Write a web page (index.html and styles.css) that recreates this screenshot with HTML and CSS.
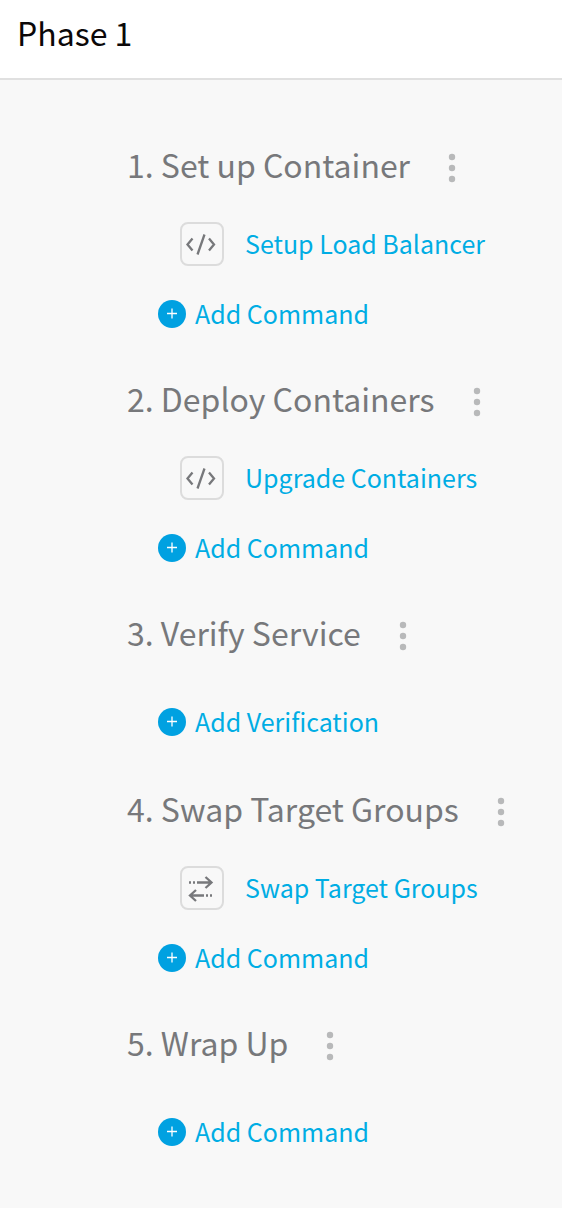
FILE: index.html
```html
<!DOCTYPE html>
<html lang="en">
<head>
<meta charset="utf-8">
<meta name="viewport" content="width=device-width, initial-scale=1">
<title>Phase 1</title>
<link rel="stylesheet" href="styles.css">
</head>
<body>
<svg class="symbols" aria-hidden="true">
  <symbol id="dots" viewBox="0 0 8 30"><circle cx="4" cy="4" r="3.2"/><circle cx="4" cy="15" r="3.2"/><circle cx="4" cy="26" r="3.2"/></symbol>
  <symbol id="code" viewBox="0 0 40 40"><path d="M10.5 14.500 5.500 20.500l5 6M27 14.500l5 6-5 6M22.500 10.500l-7 20"/></symbol>
  <symbol id="swap" viewBox="0 0 40 40"><path d="M15 14.500h14M23.500 9l6 5.500-6 5.500M7 14.500h2M11 14.500h2M22 27.500H8.500M14 22l-6 5.500 6 5.500M24 27.500h2M28 27.500h2"/></symbol>
  <symbol id="plus" viewBox="0 0 28 28"><circle cx="14" cy="14" r="14"/><path d="M9 13.500h10M14 8.500v10"/></symbol>
</svg>
<header class="phase-header"><h1 class="phase-title">Phase 1</h1></header>
<main class="steps">
  <section class="step">
    <div class="step-head"><h2 class="step-title">1. Set up Container</h2><button class="menu" aria-label="Set up Container options"><svg class="dots"><use href="#dots"/></svg></button></div>
    <a class="command" href="#"><span class="tile"><svg class="glyph"><use href="#code"/></svg></span><span class="label">Setup Load Balancer</span></a>
    <button class="add"><svg class="plus"><use href="#plus"/></svg><span class="label">Add Command</span></button>
  </section>
  <section class="step">
    <div class="step-head"><h2 class="step-title">2. Deploy Containers</h2><button class="menu" aria-label="Deploy Containers options"><svg class="dots"><use href="#dots"/></svg></button></div>
    <a class="command" href="#"><span class="tile"><svg class="glyph"><use href="#code"/></svg></span><span class="label">Upgrade Containers</span></a>
    <button class="add"><svg class="plus"><use href="#plus"/></svg><span class="label">Add Command</span></button>
  </section>
  <section class="step step-empty">
    <div class="step-head"><h2 class="step-title">3. Verify Service</h2><button class="menu" aria-label="Verify Service options"><svg class="dots"><use href="#dots"/></svg></button></div>
    <button class="add"><svg class="plus"><use href="#plus"/></svg><span class="label">Add Verification</span></button>
  </section>
  <section class="step">
    <div class="step-head"><h2 class="step-title">4. Swap Target Groups</h2><button class="menu" aria-label="Swap Target Groups options"><svg class="dots"><use href="#dots"/></svg></button></div>
    <a class="command" href="#"><span class="tile"><svg class="glyph"><use href="#swap"/></svg></span><span class="label">Swap Target Groups</span></a>
    <button class="add"><svg class="plus"><use href="#plus"/></svg><span class="label">Add Command</span></button>
  </section>
  <section class="step step-empty">
    <div class="step-head"><h2 class="step-title">5. Wrap Up</h2><button class="menu" aria-label="Wrap Up options"><svg class="dots"><use href="#dots"/></svg></button></div>
    <button class="add"><svg class="plus"><use href="#plus"/></svg><span class="label">Add Command</span></button>
  </section>
</main>
</body>
</html>
```
FILE: styles.css
```css
* { box-sizing: border-box; }
body {
  margin: 0;
  min-height: 100vh;
  background: #f8f8f8;
  color: #77787b;
  font-family: "Noto Sans CJK SC", "Source Sans Pro", sans-serif;
  font-size: 25px;
  line-height: 38px;
}
button {
  padding: 0;
  border: 0;
  background: none;
  font: inherit;
  cursor: pointer;
}
.symbols { display: none; }
.phase-header {
  padding: 8px 17px 22px;
  background: #fff;
  border-bottom: 2px solid #e0e0e0;
}
.phase-title {
  margin: 0;
  color: #0b0809;
  font-size: 32px;
  font-weight: 400;
  line-height: 48px;
}
.steps {
  display: flex;
  flex-direction: column;
  gap: 44px;
  padding: 64px 16px 52px 127px;
}
.step {
  display: flex;
  flex-direction: column;
  align-items: flex-start;
}
.step-empty { padding-bottom: 2px; }
.step-head {
  display: flex;
  align-items: center;
  gap: 38px;
}
.step-title {
  margin: 0;
  padding-bottom: 8px;
  font-size: 32px;
  font-weight: 400;
  line-height: 40px;
}
.menu {
  display: flex;
  color: #b8b9ba;
}
.dots {
  width: 8px;
  height: 30px;
  fill: currentColor;
}
.command {
  display: flex;
  align-items: center;
  gap: 21px;
  margin: 30px 0 0 53px;
  color: #00ade4;
  text-decoration: none;
}
.label { padding-bottom: 2px; }
.tile {
  display: flex;
  border: 2px solid #dcdcdc;
  border-radius: 8px;
  color: #77787b;
}
.glyph {
  width: 40px;
  height: 40px;
  fill: none;
  stroke: currentColor;
  stroke-width: 2.3;
}
.add {
  display: flex;
  align-items: center;
  gap: 9px;
  margin: 28px 0 0 31px;
  color: #00ade4;
}
.step-empty .add { margin-top: 42px; }
.plus {
  width: 28px;
  height: 28px;
  fill: #00a1e1;
  stroke: none;
}
#plus path { stroke: #fff; stroke-width: 1.3; }
```
